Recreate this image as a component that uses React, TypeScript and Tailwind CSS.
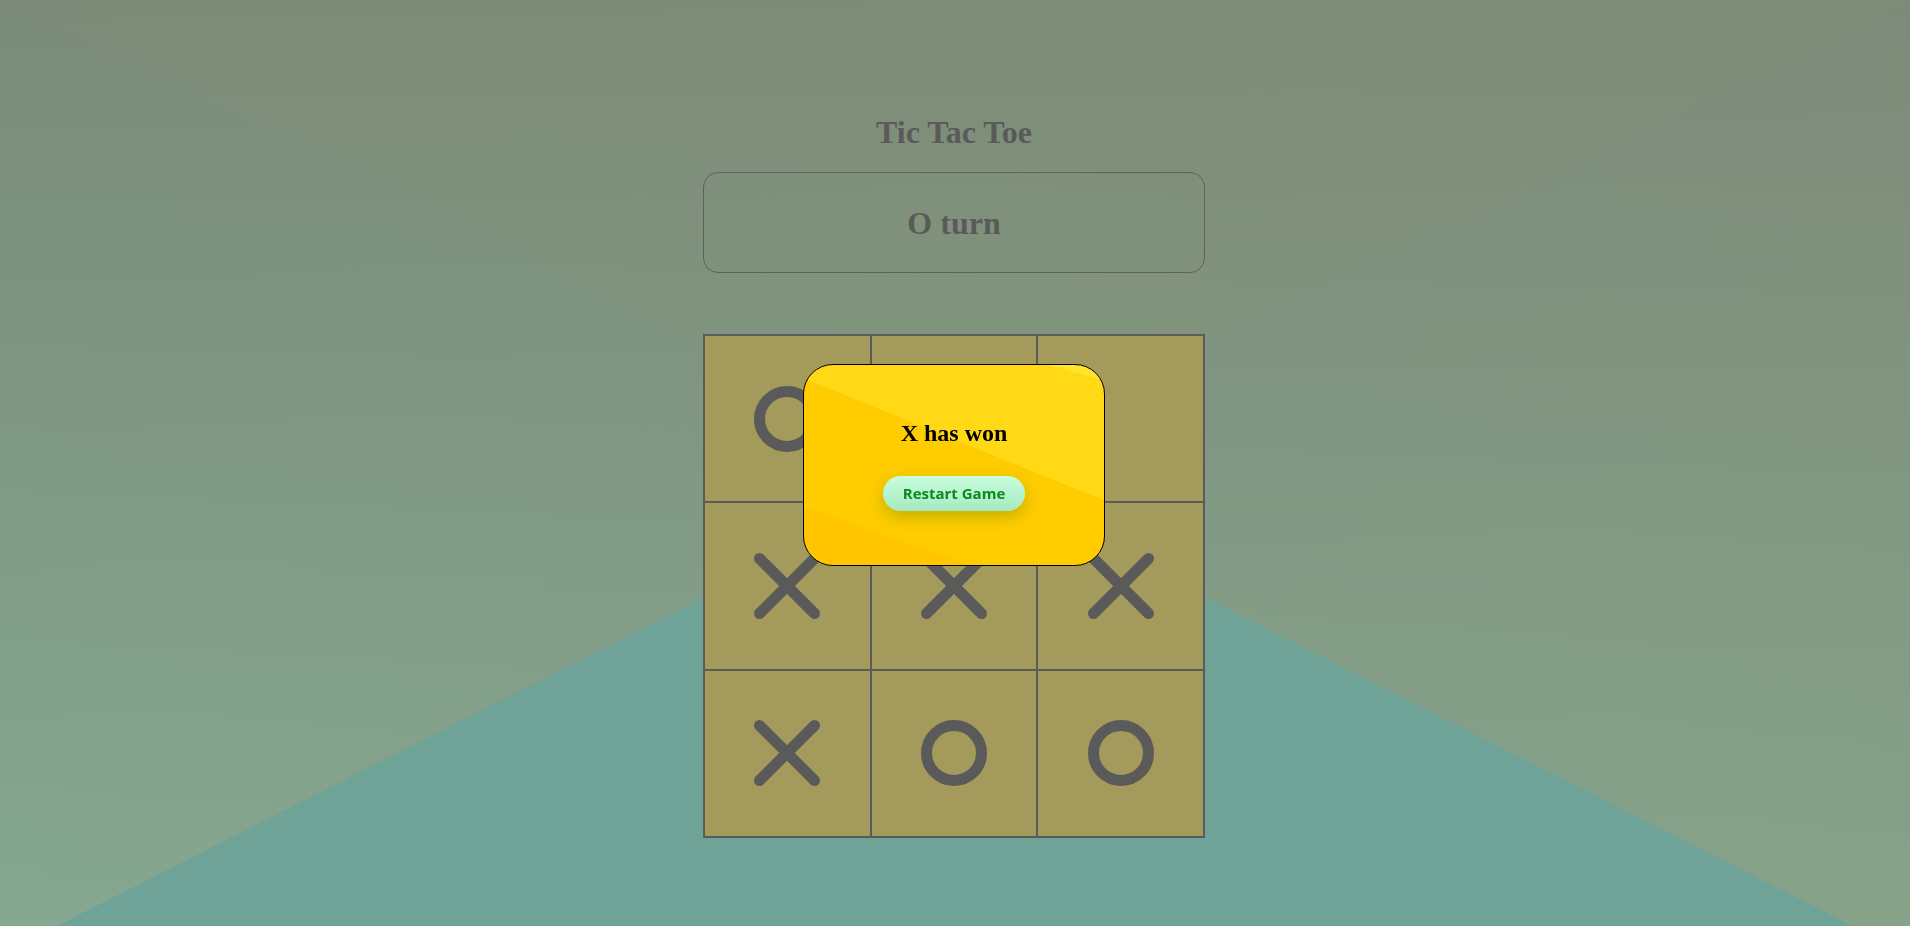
import React from 'react'

type Mark = 'X' | 'O' | null

const board: Mark[] = ['O', null, null, 'X', 'X', 'X', 'X', 'O', 'O']

function XMark() {
  return (
    <svg width="66" height="66" viewBox="0 0 66 66" fill="none">
      <line x1="5.5" y1="5.5" x2="60.5" y2="60.5" stroke="#5a5a5a" strokeWidth="11" strokeLinecap="round" />
      <line x1="60.5" y1="5.5" x2="5.5" y2="60.5" stroke="#5a5a5a" strokeWidth="11" strokeLinecap="round" />
    </svg>
  )
}

function OMark() {
  return (
    <svg width="66" height="66" viewBox="0 0 66 66" fill="none">
      <circle cx="33" cy="33" r="27.5" stroke="#5a5a5a" strokeWidth="11" />
    </svg>
  )
}

export default function App() {
  return (
    <div className="relative h-screen w-full overflow-hidden [background-image:conic-gradient(from_116.9deg_at_50%_50.8%,#6fa398_0deg_126.2deg,transparent_0),conic-gradient(from_-64.1deg_at_50%_50%,rgba(135,145,100,0.12)_0deg_128.2deg,transparent_0),linear-gradient(to_right,rgba(120,130,125,0)_0%,rgba(140,140,110,0.18)_100%),linear-gradient(to_bottom,#7a8a7b,#85a890)]">
      <div className="flex flex-col items-center pt-[114px] pr-[2px]">
        <h1 className="font-['Liberation_Serif',serif] text-[32px] font-bold leading-[37px] text-[#5a5a5a]">
          Tic Tac Toe
        </h1>

        {/* Turn indicator */}
        <div className="mt-[21px] flex h-[101px] w-[502px] items-center justify-center rounded-[15px] border border-[#5f5f5f]">
          <span className="font-['Liberation_Serif',serif] text-[32px] font-bold text-[#5a5a5a]">O turn</span>
        </div>

        {/* Board */}
        <div className="mt-[61px] grid h-[504px] w-[502px] grid-cols-3 grid-rows-3 border border-[#5b5b5b] bg-[#a39a5b]">
          {board.map((m, i) => (
            <div key={i} className="flex items-center justify-center border border-[#5b5b5b]">
              {m === 'X' && <XMark />}
              {m === 'O' && <OMark />}
            </div>
          ))}
        </div>
      </div>

      {/* Winner modal */}
      <div className="fixed inset-0 flex items-center justify-center pr-[2px]">
        <div className="mt-[4px] flex h-[202px] w-[302px] flex-col items-center justify-center gap-[25px] rounded-[30px] border border-black bg-[#ffcc00] pb-[5px] [background-image:linear-gradient(196deg,#ffe32c_5.5%,transparent_5.5%),linear-gradient(202deg,#ffd916_42%,transparent_42%),linear-gradient(199deg,transparent_81%,#ffc600_81%)]">
          <h2 className="font-['Liberation_Serif',serif] text-[24px] font-bold text-black">X has won</h2>
          <button className="h-[35px] w-[142px] rounded-full bg-gradient-to-b from-[#c8fedd] to-[#a5e9c1] font-['Open_Sans',sans-serif] text-[15px] font-bold text-[#0b8a1b] shadow-[0_6px_16px_rgba(80,130,0,0.35)]">
            Restart Game
          </button>
        </div>
      </div>
    </div>
  )
}
